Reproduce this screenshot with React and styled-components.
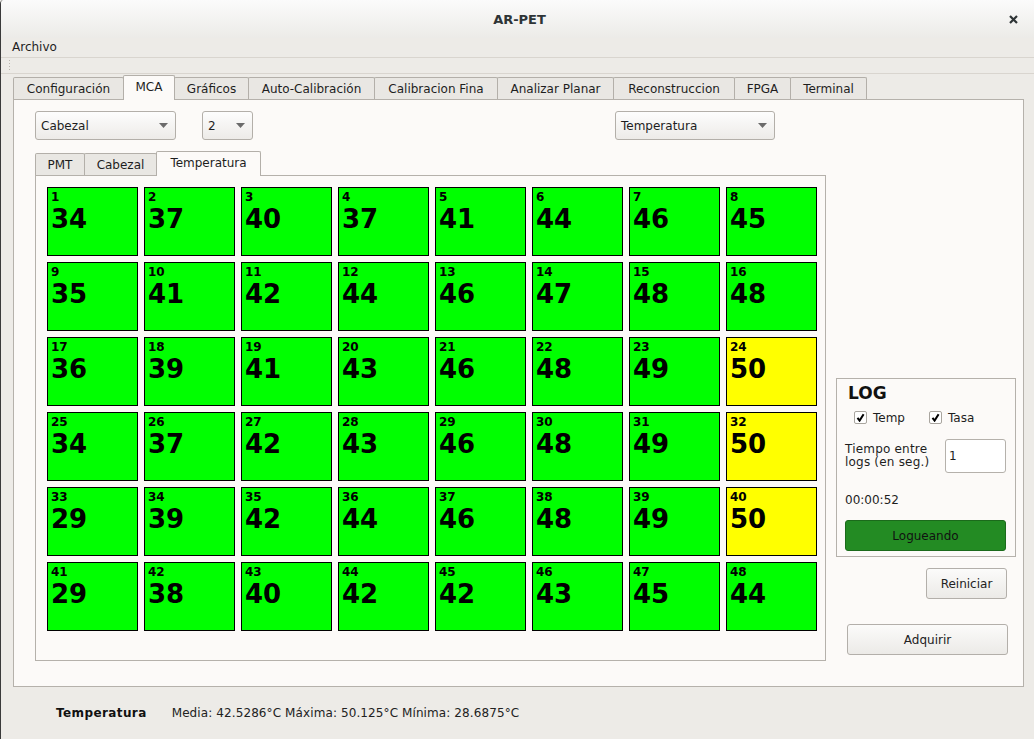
import React from "react";
import styled, { createGlobalStyle } from "styled-components";

const GlobalStyle = createGlobalStyle`
  html, body {
    margin: 0;
    padding: 0;
  }
  body {
    background: #edebe7;
    font-family: "DejaVu Sans", "Liberation Sans", sans-serif;
    font-size: 12px;
    color: #1e1e1e;
  }
`;

const TEMPS = [
  34, 37, 40, 37, 41, 44, 46, 45,
  35, 41, 42, 44, 46, 47, 48, 48,
  36, 39, 41, 43, 46, 48, 49, 50,
  34, 37, 42, 43, 46, 48, 49, 50,
  29, 39, 42, 44, 46, 48, 49, 50,
  29, 38, 40, 42, 42, 43, 45, 44,
];

// label + tab width (Qt sizes them a bit wider than the browser would)
const MAIN_TABS = [
  ["Configuración", 111],
  ["MCA", 52],
  ["Gráficos", 75],
  ["Auto-Calibración", 127],
  ["Calibracion Fina", 124],
  ["Analizar Planar", 117],
  ["Reconstruccion", 122],
  ["FPGA", 57],
  ["Terminal", 77],
];

const SUB_TABS = [
  ["PMT", 50],
  ["Cabezal", 73],
  ["Temperatura", 105],
];

const Window = styled.div`
  width: 1034px;
  height: 739px;
  box-sizing: border-box;
  border-left: 1px solid #3a3a3a;
  border-top-left-radius: 4px;
  display: flex;
  flex-direction: column;
  overflow: hidden;
  background: #edebe7;
`;

const TitleBar = styled.div`
  height: 38px;
  flex-shrink: 0;
  display: grid;
  grid-template-columns: 1fr auto 1fr;
  align-items: center;
  background: linear-gradient(#fbfbfb, #ecebe8);
`;

const Title = styled.div`
  grid-column: 2;
  font-weight: bold;
  font-size: 13px;
  color: #2e3436;
  padding-left: 4px;
`;

const CloseButton = styled.div`
  grid-column: 3;
  justify-self: end;
  padding-right: 16px;
  display: flex;
  align-items: center;
`;

const MenuBar = styled.div`
  height: 19px;
  flex-shrink: 0;
  line-height: 19px;
  padding-left: 11px;
  border-bottom: 1px solid #d9d5cf;
`;

const ToolBar = styled.div`
  height: 15px;
  flex-shrink: 0;
  border-bottom: 1px solid #d9d5cf;
  display: flex;
  align-items: center;
  padding-left: 7px;
`;

const Handle = styled.div`
  width: 4px;
  height: 13px;
  background-image: radial-gradient(#b9b5ae 0.9px, transparent 1px);
  background-size: 3px 3px;
`;

const Main = styled.div`
  flex-shrink: 0;
  padding: 1px 10px 0 12px;
`;

const TabBar = styled.div`
  height: 24px;
  display: flex;
  align-items: flex-end;
`;

const Tab = styled.div`
  position: relative;
  box-sizing: border-box;
  width: ${(p) => p.$width}px;
  height: ${(p) => (p.$active ? "25px" : "22px")};
  margin-bottom: ${(p) => (p.$active ? "-1px" : "0")};
  padding-bottom: ${(p) => (p.$active ? "3px" : "0")};
  display: flex;
  align-items: center;
  justify-content: center;
  border: 1px solid #b3afa9;
  border-bottom: none;
  border-radius: 2px 2px 0 0;
  background: ${(p) => (p.$active ? "#fcfaf8" : "#e9e7e3")};
  z-index: ${(p) => (p.$active ? 1 : 0)};
  white-space: nowrap;
  & + & {
    margin-left: -1px;
  }
`;

const Pane = styled.div`
  height: 588px;
  box-sizing: border-box;
  border: 1px solid #b5b1ab;
  background: #fcfaf8;
  padding: 11px 0 0 21px;
`;

const ComboRow = styled.div`
  height: 29px;
  display: flex;
`;

const Combo = styled.div`
  width: ${(p) => p.$width}px;
  margin-left: ${(p) => p.$offset || 0}px;
  height: 29px;
  box-sizing: border-box;
  border: 1px solid #b3afa9;
  border-radius: 3px;
  background: linear-gradient(#fdfdfd, #edebe8);
  padding: 0 7px 0 5px;
  display: flex;
  align-items: center;
  justify-content: space-between;
`;

const Body = styled.div`
  margin-top: 11px;
  display: flex;
  gap: 10px;
`;

const SubTabs = styled.div`
  width: 791px;
`;

const SubPane = styled.div`
  width: 791px;
  height: 486px;
  box-sizing: border-box;
  border: 1px solid #b5b1ab;
  background: #fcfaf8;
  padding: 11px;
`;

const CellGrid = styled.div`
  display: grid;
  grid-template-columns: repeat(8, 91px);
  grid-auto-rows: 69px;
  gap: 6px;
`;

const Cell = styled.div`
  box-sizing: border-box;
  border: 1px solid #000;
  background: ${(p) => (p.$hot ? "#ffff00" : "#00ff00")};
  padding: 3px 0 0 3px;
  color: #000;
  font-weight: bold;
`;

const CellIndex = styled.div`
  font-size: 12px;
  line-height: 13px;
`;

const CellValue = styled.div`
  margin-top: 2px;
  font-size: 26px;
  line-height: 26px;
`;

const RightCol = styled.div`
  width: 181px;
  display: flex;
  flex-direction: column;
  justify-content: flex-end;
  padding-bottom: 6px;
`;

const LogBox = styled.div`
  width: 180px;
  box-sizing: border-box;
  border: 1px solid #b5b1ab;
  padding: 4px 9px 5px 8px;
  display: flex;
  flex-direction: column;
`;

const LogTitle = styled.div`
  margin-left: 3px;
  font-size: 17px;
  line-height: 20px;
  font-weight: bold;
  color: #111;
`;

const CheckRow = styled.div`
  margin-top: 8px;
  height: 13px;
  padding-left: 9px;
  display: flex;
  align-items: center;
`;

const CheckItem = styled.div`
  width: 75px;
  display: flex;
  align-items: center;
  gap: 6px;
`;

const CheckBox = styled.div`
  width: 13px;
  height: 13px;
  box-sizing: border-box;
  border: 1px solid #a9a59f;
  border-radius: 2px;
  background: #fff;
  display: flex;
  align-items: center;
  justify-content: center;
`;

const IntervalRow = styled.div`
  margin-top: 15px;
  height: 34px;
  display: flex;
  align-items: center;
  justify-content: space-between;
`;

const IntervalLabel = styled.div`
  line-height: 13px;
  letter-spacing: 0.2px;
`;

const NumberInput = styled.div`
  width: 61px;
  height: 34px;
  box-sizing: border-box;
  border: 1px solid #b5b1ab;
  border-radius: 3px;
  background: #fff;
  padding-left: 3px;
  display: flex;
  align-items: center;
`;

const Timer = styled.div`
  margin-top: 20px;
  line-height: 14px;
`;

const Button = styled.div`
  height: 31px;
  box-sizing: border-box;
  width: ${(p) => p.$width}px;
  border: 1px solid #b3afaa;
  border-radius: 3px;
  background: linear-gradient(#fbfbfa, #eceae7);
  display: flex;
  align-items: center;
  justify-content: center;
  color: #222;
`;

const LogButton = styled(Button)`
  margin-top: 13px;
  background: #238b23;
  border-color: #1b6a1b;
  color: #111;
`;

const ResetButton = styled(Button)`
  margin-top: 11px;
  align-self: flex-end;
  margin-right: 10px;
`;

const AcquireButton = styled(Button)`
  margin-top: 25px;
  margin-left: 11px;
`;

const StatusBar = styled.div`
  height: 52px;
  flex-shrink: 0;
  display: flex;
  align-items: center;
  padding-left: 55px;
`;

const StatusTitle = styled.span`
  font-weight: bold;
  letter-spacing: 0.4px;
  color: #111;
`;

const StatusText = styled.span`
  margin-left: 25px;
  letter-spacing: 0.1px;
  color: #222;
`;

const Arrow = () => (
  <svg width="9" height="5" viewBox="0 0 9 5">
    <path d="M0 0 H9 L4.5 5 Z" fill="#6b6b6b" />
  </svg>
);

const Check = () => (
  <svg width="9" height="9" viewBox="0 0 9 9">
    <path d="M1.5 4.8 L3.6 7.6 L7.6 1.2" fill="none" stroke="#000" strokeWidth="2" />
  </svg>
);

const CloseIcon = () => (
  <svg width="9" height="9" viewBox="0 0 9 9">
    <path d="M1 1 L8 8 M8 1 L1 8" stroke="#2e3436" strokeWidth="2.2" />
  </svg>
);

const App = () => {
  return (
    <React.Fragment>
      <GlobalStyle />
      <Window>
        <TitleBar>
          <Title>AR-PET</Title>
          <CloseButton>
            <CloseIcon />
          </CloseButton>
        </TitleBar>
        <MenuBar>Archivo</MenuBar>
        <ToolBar>
          <Handle />
        </ToolBar>

        <Main>
          <TabBar>
            {MAIN_TABS.map(([t, w]) => (
              <Tab key={t} $width={w} $active={t === "MCA"}>
                {t}
              </Tab>
            ))}
          </TabBar>
          <Pane>
            <ComboRow>
              <Combo $width={141}>
                Cabezal
                <Arrow />
              </Combo>
              <Combo $width={51} $offset={26}>
                2
                <Arrow />
              </Combo>
              <Combo $width={160} $offset={362}>
                Temperatura
                <Arrow />
              </Combo>
            </ComboRow>

            <Body>
              <SubTabs>
                <TabBar>
                  {SUB_TABS.map(([t, w]) => (
                    <Tab key={t} $width={w} $active={t === "Temperatura"}>
                      {t}
                    </Tab>
                  ))}
                </TabBar>
                <SubPane>
                  <CellGrid>
                    {TEMPS.map((v, i) => (
                      <Cell key={i} $hot={v >= 50}>
                        <CellIndex>{i + 1}</CellIndex>
                        <CellValue>{v}</CellValue>
                      </Cell>
                    ))}
                  </CellGrid>
                </SubPane>
              </SubTabs>

              <RightCol>
                <LogBox>
                  <LogTitle>LOG</LogTitle>
                  <CheckRow>
                    <CheckItem>
                      <CheckBox>
                        <Check />
                      </CheckBox>
                      Temp
                    </CheckItem>
                    <CheckItem>
                      <CheckBox>
                        <Check />
                      </CheckBox>
                      Tasa
                    </CheckItem>
                  </CheckRow>
                  <IntervalRow>
                    <IntervalLabel>
                      Tiempo entre
                      <br />
                      logs (en seg.)
                    </IntervalLabel>
                    <NumberInput>1</NumberInput>
                  </IntervalRow>
                  <Timer>00:00:52</Timer>
                  <LogButton $width={161}>Logueando</LogButton>
                </LogBox>
                <ResetButton $width={81}>Reiniciar</ResetButton>
                <AcquireButton $width={161}>Adquirir</AcquireButton>
              </RightCol>
            </Body>
          </Pane>
        </Main>

        <StatusBar>
          <StatusTitle>Temperatura</StatusTitle>
          <StatusText>
            Media: 42.5286°C Máxima: 50.125°C Mínima: 28.6875°C
          </StatusText>
        </StatusBar>
      </Window>
    </React.Fragment>
  );
};

export default App;
